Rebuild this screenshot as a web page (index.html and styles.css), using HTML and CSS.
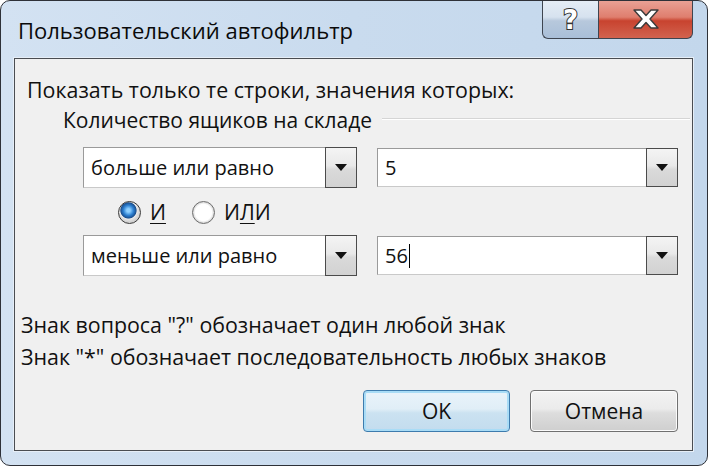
FILE: index.html
```html
<!DOCTYPE html>
<html lang="ru">
<head>
<meta charset="utf-8">
<title>Пользовательский автофильтр</title>
<link rel="stylesheet" href="styles.css">
</head>
<body>
<div class="window">
  <div class="titlebar">
    <div class="title">Пользовательский автофильтр</div>
    <div class="caption-buttons">
      <div class="cap-btn help"><span class="help-glyph">?</span></div>
      <div class="cap-btn close">
        <svg width="28" height="20" viewBox="0 0 28 20">
          <polygon points="2,1 9,1 14,6.5 19,1 26,1 18,10 26,19 19,19 14,13.5 9,19 2,19 10,10" fill="#ffffff" stroke="#3b3b3b" stroke-width="1.4" stroke-linejoin="round"/>
        </svg>
      </div>
    </div>
  </div>
  <div class="panel">
    <div class="line1">Показать только те строки, значения которых:</div>
    <div class="group">
      <span class="group-label">Количество ящиков на складе</span>
      <span class="group-rule"></span>
    </div>
    <div class="row row1">
      <div class="combo op"><span class="combo-text">больше или равно</span><span class="combo-btn"><span class="arrow"></span></span></div>
      <div class="combo val"><span class="combo-text">5</span><span class="combo-btn"><span class="arrow"></span></span></div>
    </div>
    <div class="radios">
      <span class="radio checked"></span><span class="radio-label"><u>И</u></span>
      <span class="radio"></span><span class="radio-label">И<u>Л</u>И</span>
    </div>
    <div class="row row2">
      <div class="combo op"><span class="combo-text">меньше или равно</span><span class="combo-btn"><span class="arrow"></span></span></div>
      <div class="combo val"><span class="combo-text">56<span class="caret"></span></span><span class="combo-btn"><span class="arrow"></span></span></div>
    </div>
    <div class="hint hint1">Знак вопроса "?" обозначает один любой знак</div>
    <div class="hint hint2">Знак "*" обозначает последовательность любых знаков</div>
    <div class="buttons">
      <div class="btn ok">OK</div>
      <div class="btn cancel">Отмена</div>
    </div>
  </div>
</div>
</body>
</html>
```

FILE: styles.css
```css
html, body {
  margin: 0;
  padding: 0;
  background: #ffffff;
}
body {
  width: 708px;
  height: 466px;
  overflow: hidden;
  font-family: "Open Sans", "Noto Sans", "DejaVu Sans", sans-serif;
  color: #111;
}
.window {
  box-sizing: border-box;
  width: 708px;
  height: 466px;
  border: 1px solid #2e3138;
  border-radius: 10px 10px 10px 10px;
  background: linear-gradient(90deg, #d3e2f2 0%, #c9dbee 50%, #c3d7ec 100%);
  display: flex;
  flex-direction: column;
  padding: 0 14px 14px 13px;
  overflow: hidden;
}
.titlebar {
  height: 57px;
  display: flex;
  align-items: flex-start;
  flex: none;
}
.title {
  padding-left: 4px;
  padding-top: 16px;
  font-size: 22px;
  line-height: 27px;
  color: #0a0a0a;
}
.caption-buttons {
  margin-left: auto;
  display: flex;
  margin-top: -1px;
}
.cap-btn {
  box-sizing: border-box;
  height: 39px;
  border: 1px solid #3e4550;
  border-top: none;
  display: flex;
  align-items: center;
  justify-content: center;
}
.help {
  width: 56px;
  border-radius: 0 0 0 6px;
  border-right: none;
  background: linear-gradient(#e5edf6 0%, #d6e2ef 45%, #b7c8dc 55%, #a9bfd8 100%);
}
.help-glyph {
  font-family: "DejaVu Sans", sans-serif;
  font-weight: bold;
  font-size: 26px;
  line-height: 26px;
  color: #ffffff;
  -webkit-text-stroke: 2px #333;
  paint-order: stroke fill;
  margin-top: 1px;
}
.close {
  width: 95px;
  border-radius: 0 0 6px 0;
  background: linear-gradient(#eaa397 0%, #df7e6e 45%, #c8432f 55%, #d2634f 100%);
}
.panel {
  flex: 1;
  box-sizing: border-box;
  border: 1px solid #4a4d52;
  background: #f0f0f0;
  box-shadow: 0 0 0 1px #e6eef7;
  display: flex;
  flex-direction: column;
  font-size: 21.4px;
  line-height: 24px;
  padding: 19px 14px 0 12px;
}
.line1 {
  height: 24px;
}
.group {
  display: flex;
  align-items: center;
  margin-top: 6px;
  padding-left: 36px;
  margin-right: -12px;
  font-size: 21px;
}
.group-rule {
  flex: 1;
  height: 0;
  border-top: 1px solid #d5d5d5;
  border-bottom: 1px solid #ffffff;
  margin-left: 10px;
  margin-top: -2px;
}
.row {
  display: flex;
  gap: 20px;
  padding-left: 56px;
}
.row1 { margin-top: 15px; }
.row2 { margin-top: 11px; }
.combo {
  box-sizing: border-box;
  height: 41px;
  background: #ffffff;
  border: 1px solid #9a9a9a;
  border-bottom-color: #c9c9c9;
  display: flex;
  align-items: stretch;
  font-size: 20px;
}
.combo.op { width: 274px; }
.combo.val { width: 301px; margin-top: 1px; height: 39px; }
.combo-text {
  flex: 1;
  padding-left: 7px;
  display: flex;
  align-items: center;
  color: #111;
}
.combo-btn {
  box-sizing: border-box;
  width: 32px;
  border: 1px solid #4b4b4b;
  margin: -1px -1px -1px 0;
  background: linear-gradient(#f4f4f4 0%, #e9e9e9 45%, #dadada 55%, #d2d2d2 100%);
  display: flex;
  align-items: center;
  justify-content: center;
}
.arrow {
  width: 0;
  height: 0;
  border-left: 6px solid transparent;
  border-right: 6px solid transparent;
  border-top: 7px solid #111;
}
.caret {
  display: inline-block;
  width: 1px;
  height: 24px;
  background: #000;
  margin-left: 1px;
  vertical-align: middle;
}
.radios {
  display: flex;
  align-items: center;
  height: 24px;
  margin-top: 12px;
  padding-left: 91px;
  font-size: 21px;
}
.radio {
  box-sizing: border-box;
  width: 23px;
  height: 23px;
  border-radius: 50%;
  border: 1px solid #6e6e6e;
  background: radial-gradient(circle at 50% 50%, #ffffff 0 55%, #d9d9d9 70%, #f5f5f5 100%);
}
.radio.checked {
  border-color: #3a3a3a;
  background: radial-gradient(circle at 45% 40%, #8fd0ff 0 10%, #2c7fd0 30%, #1a4f8f 45%, #e8e8e8 50%, #cfcfcf 70%, #f3f3f3 100%);
}
.radio-label {
  margin-left: 9px;
  margin-right: 26px;
}
.radio-label u {
  text-decoration-thickness: 1px;
  text-underline-offset: 3px;
}
.hint {
  height: 32px;
  line-height: 32px;
  margin-left: -6px;
}
.hint1 { margin-top: 33px; }
.buttons {
  display: flex;
  justify-content: flex-end;
  gap: 20px;
  margin-top: 17px;
}
.btn {
  box-sizing: border-box;
  height: 42px;
  display: flex;
  align-items: center;
  justify-content: center;
  border-radius: 4px;
  font-size: 21px;
}
.btn.ok {
  width: 147px;
  border: 1px solid #3d7bad;
  box-shadow: inset 0 0 0 2px #a9dcf6;
  background: linear-gradient(#eaf3fa 0%, #e0eef7 45%, #cbe2f1 55%, #c3dcee 100%);
}
.btn.cancel {
  width: 148px;
  border: 1px solid #707070;
  box-shadow: inset 0 0 0 1px #fbfbfb;
  background: linear-gradient(#f3f3f3 0%, #ebebeb 45%, #dddddd 55%, #cfcfcf 100%);
}
```
